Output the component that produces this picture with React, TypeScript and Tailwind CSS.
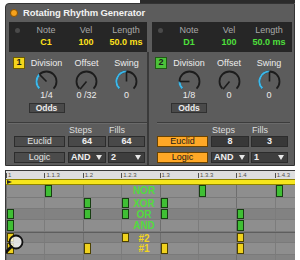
import React from 'react';

type Side = {
  num: string;
  numClass: string;
  valClass: string;
  note: string;
  division: string;
  divAngle: number;
  offset: string;
  active: boolean;
  steps: string;
  fills: string;
  logicVal: string;
};

const sides: Side[] = [
  {
    num: '1',
    numClass: 'bg-[#f4d51c] border-[#6b5c00]',
    valClass: 'text-[#ffe21c]',
    note: 'C1',
    division: '1/4',
    divAngle: -45,
    offset: '0 /32',
    active: false,
    steps: '64',
    fills: '64',
    logicVal: '2',
  },
  {
    num: '2',
    numClass: 'bg-[#4cc23a] border-[#1f5a14]',
    valClass: 'text-[#4ee03c]',
    note: 'D1',
    division: '1/8',
    divAngle: -90,
    offset: '0',
    active: true,
    steps: '8',
    fills: '3',
    logicVal: '1',
  },
];

const pt = (deg: number, r: number) => {
  const a = (deg * Math.PI) / 180;
  return [11.5 + r * Math.sin(a), 11.5 - r * Math.cos(a)];
};

const Knob = ({ angle, fill }: { angle: number; fill: boolean }) => {
  const r = 10;
  const [sx, sy] = pt(-135, r);
  const [ex, ey] = pt(135, r);
  const [vx, vy] = pt(angle, r);
  const large = angle + 135 > 180 ? 1 : 0;
  return (
    <svg width="23" height="23" viewBox="0 0 23 23">
      <path d={`M${sx} ${sy} A${r} ${r} 0 1 1 ${ex} ${ey}`} fill="none" stroke="#1c1c1c" strokeWidth="1.8" />
      {fill && (
        <path d={`M${sx} ${sy} A${r} ${r} 0 ${large} 1 ${vx} ${vy}`} fill="none" stroke="#3db8ea" strokeWidth="2" />
      )}
      <line x1="11.5" y1="11.5" x2={vx} y2={vy} stroke="#1c1c1c" strokeWidth="1.6" />
    </svg>
  );
};

const Caret = () => (
  <svg width="6" height="5" viewBox="0 0 6 5">
    <path d="M0 0 L6 0 L3 5 Z" fill="#e8e8e8" />
  </svg>
);

const InfoBox = ({ side, className }: { side: Side; className: string }) => (
  <div className={`h-[30px] bg-[#262626] flex ${className}`}>
    <div className="w-[5px] h-[5px] rounded-full bg-[#4a4a4a] mt-[6px] ml-[6px]" />
    <div className="grid grid-cols-3 w-[120px] ml-[6px] pt-[3px]">
      {[
        ['Note', side.note],
        ['Vel', '100'],
        ['Length', '50.0 ms'],
      ].map(([label, value]) => (
        <div key={label} className="flex flex-col items-center">
          <span className="text-[9px] leading-[11px] text-[#a8a8a8]">{label}</span>
          <span className={`text-[9px] leading-[11px] mt-[1px] font-bold ${side.valClass}`}>{value}</span>
        </div>
      ))}
    </div>
  </div>
);

const Section = ({ side, left }: { side: Side; left: boolean }) => {
  const btn = side.active
    ? 'bg-[#ffa826] border-[#6b4300] text-[#1a1a1a]'
    : 'bg-[#4b4b4b] border-[#2c2c2c] text-[#e4e4e4]';
  const box = left ? 'bg-[#494949]' : 'bg-[#383838]';
  const knobs = [
    { label: 'Division', value: side.division, angle: side.divAngle, fill: true },
    { label: 'Offset', value: side.offset, angle: -140, fill: false },
    { label: 'Swing', value: '0', angle: 0, fill: true },
  ];
  return (
    <div className={`pt-[5px] ${left ? 'w-[141px]' : 'flex-1'}`}>
      <div className={`flex ${left ? 'pl-[7px]' : 'pl-[6px]'}`}>
        <div
          className={`w-[12px] h-[12px] border flex items-center justify-center text-[9px] font-bold text-[#1a1a1a] ${side.numClass}`}
        >
          {side.num}
        </div>
        <div className={`grid grid-cols-3 w-[120px] ${left ? 'ml-[1.5px]' : 'ml-[2px]'}`}>
          {knobs.map((k, i) => (
            <div key={k.label} className="flex flex-col items-center">
              <span className="text-[9px] leading-[12px] text-[#ececec]">{k.label}</span>
              <div className="mt-[1px]">
                <Knob angle={k.angle} fill={k.fill} />
              </div>
              <span className="-mt-[2px] text-[9px] leading-[8px] text-[#ececec]">{k.value}</span>
              {i === 0 && (
                <div className="mt-[4px] w-[36px] h-[10px] bg-[#4a4a4a] border border-[#303030] flex items-center justify-center text-[8.5px] font-bold text-[#ececec]">
                  Odds
                </div>
              )}
            </div>
          ))}
        </div>
      </div>
      <div className={`mt-[9px] h-[2px] border-t border-[#3c3c3c] border-b-[#6a6a6a] border-b ${left ? 'ml-[2px]' : 'ml-[8px] mr-[4px]'}`} />
      <div className="pl-[8px]">
        <div className="flex mt-[1px] text-[9px] leading-[10px] text-[#dcdcdc]">
          <span className="w-[51px]" />
          <span className="ml-[3px] w-[38px] pl-[1px]">Steps</span>
          <span className="ml-[2px] w-[37px] pl-[1px]">Fills</span>
        </div>
        <div className="flex mt-[1px] h-[11px] text-[9px]">
          <div className={`w-[51px] border flex items-center justify-center ${btn}`}>Euclid</div>
          <div className={`ml-[3px] w-[38px] border border-[#2c2c2c] flex items-center justify-center font-bold text-[#efefef] ${box}`}>
            {side.steps}
          </div>
          <div className={`ml-[2px] w-[37px] border border-[#2c2c2c] flex items-center justify-center font-bold text-[#efefef] ${box}`}>
            {side.fills}
          </div>
        </div>
        <div className="flex mt-[5px] h-[11px] text-[9px]">
          <div className={`w-[51px] border flex items-center justify-center ${btn}`}>Logic</div>
          <div className="ml-[3px] w-[38px] border border-[#2c2c2c] bg-[#3e3e3e] flex items-center justify-between pl-[2px] pr-[3px] font-bold text-[#efefef]">
            <span>AND</span>
            <Caret />
          </div>
          <div className="ml-[2px] w-[37px] border border-[#2c2c2c] bg-[#3e3e3e] flex items-center justify-between pl-[2px] pr-[3px] font-bold text-[#efefef]">
            <span>{side.logicVal}</span>
            <Caret />
          </div>
        </div>
      </div>
    </div>
  );
};

const rulerLabels = ['1', '1.1.3', '1.2', '1.2.3', '1.3', '1.3.3', '1.4', '1.4.3'];

const lanes = [
  { label: 'NOR', notes: [1, 5, 7], h: 'h-[13px]', bg: 'bg-[#8e8e8e]', green: true },
  { label: 'XOR', notes: [2, 3, 4], h: 'h-[11px]', bg: 'bg-[#8e8e8e]', green: true },
  { label: 'OR', notes: [0, 2, 3, 4, 6], h: 'h-[11px]', bg: 'bg-[#828282]', green: true },
  { label: 'AND', notes: [0, 6], h: 'h-[12px]', bg: 'bg-[#8e8e8e]', green: true },
  { label: '#2', notes: [0, 3, 6], h: 'h-[11px]', bg: 'bg-[#838383]', green: false },
  { label: '#1', notes: [0, 2, 4, 6], h: 'h-[12px]', bg: 'bg-[#8e8e8e]', green: false },
  { label: '', notes: [], h: 'h-[12px]', bg: 'bg-[#838383]', green: false },
];

const ClipView = () => (
  <div className="ml-[5px] w-[290px] h-[90px] relative overflow-hidden border-l border-[#3a3a3a] bg-[#8e8e8e]">
    <div className="h-[1px] bg-[#3a3a3a]" />
    <div className="h-[8px] bg-[#dedede] grid grid-cols-[repeat(8,38.4px)]">
      {rulerLabels.map((l) => (
        <div key={l} className="flex items-end pb-[1px]">
          <div className="w-px h-[5px] bg-[#505050]" />
          <span className="ml-[1px] text-[6px] leading-[6px] text-[#505050]">{l}</span>
        </div>
      ))}
    </div>
    <div className="h-[6px] bg-[#f6e61c] border-y border-[#8d8300] flex items-center">
      <svg width="5" height="4" viewBox="0 0 5 4" className="ml-[1px]">
        <path d="M0 0 L5 2 L0 4 Z" fill="#2a2a2a" />
      </svg>
    </div>
    {lanes.map((lane, li) => (
      <div
        key={li}
        className={`relative grid grid-cols-[repeat(8,38.4px)] border-b border-[#7a7a7a] ${lane.h} ${lane.bg} ${
          li === 4 ? 'border-t border-t-[#5e5e5e]' : ''
        }`}
      >
        {Array.from({ length: 8 }).map((_, i) => (
          <div key={i} className={`border-l ${i % 2 === 0 ? 'border-[#6e6e6e]' : 'border-[#7c7c7c]'}`}>
            {lane.notes.includes(i) && (
              <div
                className={`w-[7px] h-full border ${
                  lane.green ? 'bg-[#3fbf34] border-[#173d12]' : 'bg-[#f0d21e] border-[#4d4200]'
                }`}
              />
            )}
          </div>
        ))}
        {lane.label && (
          <span
            className={`absolute left-[121px] top-0 w-[34px] text-center text-[10px] font-bold leading-[11px] ${
              lane.green ? 'text-[#52da3e]' : 'text-[#f2d420]'
            }`}
          >
            {lane.label}
          </span>
        )}
      </div>
    ))}
    <svg width="24" height="28" viewBox="0 0 24 28" className="absolute left-[-5px] top-[61px]">
      <circle cx="15" cy="11" r="6.5" fill="rgba(255,255,255,0.75)" stroke="#111" strokeWidth="1.8" />
      <line x1="10.3" y1="15.7" x2="4" y2="22" stroke="#111" strokeWidth="3" strokeLinecap="round" />
    </svg>
  </div>
);

export default function App() {
  return (
    <div className="w-[300px] h-[260px] bg-white overflow-hidden font-['Liberation_Sans',Arial,sans-serif]">
      <div className="flex h-[3px]">
        <div className="w-[140px]" />
        <div className="w-[155px] bg-[#2b2b2b]" />
      </div>
      <div className="ml-[5px] w-[290px] h-[163px] bg-[#5c5c5c] border border-[#333333] rounded-tl-[4px] flex flex-col">
        <div className="h-[18px] flex items-center pl-[4px]">
          <div className="w-[8px] h-[8px] rounded-full bg-[#f6a21c] border border-[#8a5200]" />
          <span className="ml-[5px] text-[9.5px] font-bold text-[#f2f2f2] tracking-[-0.1px]">
            Rotating Rhythm Generator
          </span>
        </div>
        <div className="flex">
          <InfoBox side={sides[0]} className="ml-[3px] w-[138px]" />
          <InfoBox side={sides[1]} className="ml-[5px] w-[140px]" />
        </div>
        <div className="flex flex-1">
          <Section side={sides[0]} left />
          <div className="w-[2px] bg-[#3a3a3a]" />
          <Section side={sides[1]} left={false} />
        </div>
      </div>
      <div className="h-[4px]" />
      <ClipView />
    </div>
  );
}
